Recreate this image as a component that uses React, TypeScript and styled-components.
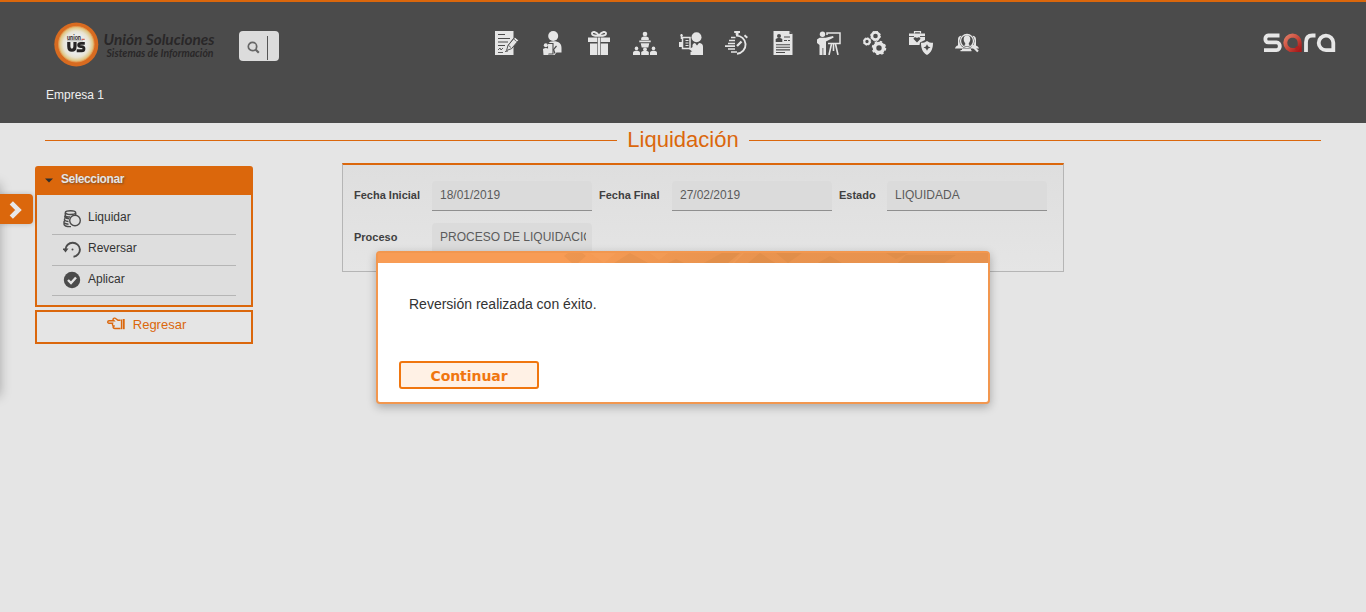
import React from 'react';
import styled, { createGlobalStyle } from 'styled-components';

const orange = '#db670c';
const ink = '#4b4b4b';
const light = '#e5e5e5';

const GlobalStyle = createGlobalStyle`
  * { box-sizing: border-box; }
  body {
    margin: 0;
    background: ${light};
    font-family: "Liberation Sans", Arial, sans-serif;
    font-size: 12px;
    color: #333;
    overflow: hidden;
  }
`;

const Page = styled.div`
  position: relative;
  min-height: 612px;
  overflow: hidden;
`;

const Header = styled.header`
  height: 123px;
  background: ${ink};
  border-top: 2px solid ${orange};
`;

const TopRow = styled.div`
  display: flex;
  height: 80px;
  padding: 19px 30px 0 52px;
`;

const SearchBox = styled.div`
  display: flex;
  align-items: center;
  width: 40px;
  height: 30px;
  margin: 10px 0 0 19px;
  padding: 0 11px 0 8px;
  background: #dcdcdc;
  border-radius: 4px;
  justify-content: space-between;
`;

const SearchIcon = styled.svg`
  display: block;
  width: 13px;
  height: 13px;
  margin-top: 3px;
`;

const SearchCaret = styled.span`
  width: 1px;
  height: 24px;
  margin-top: 3px;
  background: #555;
`;

const Nav = styled.nav`
  display: flex;
  gap: 22px;
  margin: 10px 0 0 216px;
`;

const NavIcon = styled.svg`
  display: block;
  width: 24px;
  height: 24px;
  color: ${light};
`;

const BrandSlot = styled.div`
  margin: 11px 0 0 auto;
`;

const Company = styled.div`
  padding: 6px 0 0 46px;
  line-height: 14px;
  color: #f0f0f0;
`;

const TitleRow = styled.div`
  display: flex;
  align-items: center;
  gap: 10px;
  height: 35px;
  padding: 0 45px;
`;

const Rule = styled.span`
  flex: 1;
  height: 1px;
  background: ${orange};
`;

const Title = styled.h1`
  margin: 0;
  padding-bottom: 2px;
  width: 112px;
  text-align: center;
  white-space: nowrap;
  font-size: 22px;
  line-height: 26px;
  font-weight: 400;
  color: ${orange};
`;

const Main = styled.main`
  display: flex;
  align-items: flex-start;
  padding: 5px 0 0 35px;
`;

const Sidebar = styled.aside`
  width: 218px;
  margin-top: 3px;
`;

const Menu = styled.section`
  height: 141px;
  border: 2px solid ${orange};
  border-radius: 3px 3px 0 0;
  background: #dedede;
`;

const MenuHeader = styled.div`
  display: flex;
  align-items: center;
  height: 27px;
  gap: 8px;
  padding: 0 8px 5px;
  background: ${orange};
  color: ${light};
  font-weight: 700;
  text-shadow: 1px 1px 2px rgba(60, 60, 60, 0.6);
`;

const MenuCaret = styled.svg`
  display: block;
  width: 8px;
  height: 5px;
  margin-top: 3px;
`;

const MenuLabel = styled.span`
  letter-spacing: -0.4px;
`;

const MenuList = styled.div`
  padding: 9px 15px 0;
`;

const MenuItem = styled.div`
  display: flex;
  align-items: center;
  gap: 7px;
  height: 31px;
  padding: 0 0 4px 11px;
  border-bottom: 1px solid #b5b5b5;
  &:last-child { height: 30px; }
`;

const ItemIcon = styled.svg`
  display: block;
  flex: none;
  width: 18px;
  height: 18px;
  margin-top: 3px;
  color: ${ink};
`;

const BackButton = styled.div`
  display: flex;
  justify-content: center;
  gap: 8px;
  height: 34px;
  margin-top: 3px;
  padding: 5px 0 0 5px;
  border: 2px solid ${orange};
  color: ${orange};
  font-size: 13px;
  line-height: 15px;
`;

const Panel = styled.section`
  display: grid;
  grid-template-columns: 78px 160px 80px 160px 55px 160px;
  grid-auto-rows: 30px;
  row-gap: 12px;
  width: 722px;
  height: 109px;
  margin-left: 89px;
  padding: 16px 0 0 11px;
  border: 1px solid #b5b5b5;
  border-top: 2px solid ${orange};
  background: linear-gradient(#dedede, #e5e5e5);
`;

const Label = styled.label<{ $inset?: number }>`
  padding-left: ${p => p.$inset ?? 0}px;
  font-size: 11px;
  line-height: 29px;
  font-weight: 700;
  color: #3f3f3f;
  white-space: nowrap;
`;

const Field = styled.div`
  padding: 0 6px 0 8px;
  border-bottom: 1px solid #8f8f8f;
  border-radius: 4px 4px 0 0;
  background: #dbdbdb;
  line-height: 28px;
  color: #5b5b5b;
`;

const FieldText = styled.span`
  display: block;
  overflow: hidden;
  white-space: nowrap;
`;

const DrawerShade = styled.div`
  position: absolute;
  left: -20px;
  top: 184px;
  width: 20px;
  height: 212px;
  box-shadow: 0 0 12px rgba(0, 0, 0, 0.28);
`;

const DrawerHandle = styled.button`
  position: absolute;
  left: 0;
  top: 194px;
  display: flex;
  align-items: center;
  width: 33px;
  height: 30px;
  padding: 2px 0 0 9px;
  border: 0;
  border-radius: 0 4px 4px 0;
  background: ${orange};
  box-shadow: 0 0 5px rgba(0, 0, 0, 0.2);
`;

const Dialog = styled.div`
  position: absolute;
  left: 376px;
  top: 251px;
  width: 614px;
  height: 153px;
  border: 2px solid #f2974f;
  border-radius: 4px;
  background: #fff;
  box-shadow: 0 3px 10px rgba(0, 0, 0, 0.28);
`;

const DialogBar = styled.svg`
  display: block;
  width: 610px;
  height: 10px;
`;

const Message = styled.p`
  margin: 33px 0 0 31px;
  font-size: 14px;
  line-height: 16px;
`;

const Continue = styled.button`
  display: block;
  width: 140px;
  height: 28px;
  margin: 49px 0 0 21px;
  padding: 1px 0 0;
  border: 2px solid #f0760f;
  border-radius: 3px;
  background: #fff1e5;
  color: #f0760f;
  font: 700 14px/22px "DejaVu Sans", Verdana, sans-serif;
  letter-spacing: -0.05px;
`;

const CompanyLogo = () => (
  <svg width="168" height="48" viewBox="0 0 168 48">
    <defs>
      <radialGradient id="disc">
        <stop offset="0.55" stopColor="#ebebe8" />
        <stop offset="0.74" stopColor="#e8e3d2" />
        <stop offset="0.9" stopColor="#e0cb92" />
        <stop offset="1" stopColor="#dfb062" />
      </radialGradient>
    </defs>
    <circle cx="24.3" cy="23.5" r="22" fill="#d86b20" />
    <circle cx="24.3" cy="23.2" r="17.8" fill="url(#disc)" stroke="#e69a55" strokeWidth="0.8" />
    <text x="15" y="18.5" fontFamily="Lato" fontWeight="900" fontSize="7.5" fill="#332d2d" textLength="14" lengthAdjust="spacingAndGlyphs">union</text>
    <path d="M29.5 18.3h3.200" stroke="#c34132" strokeWidth="1" />
    <path d="M15 19.8h16" stroke="#999" strokeWidth="0.7" />
    <path d="M16.8 21v4.200c0 5.400 6.200 5.400 6.200 0V21" fill="none" stroke="#272425" strokeWidth="3.200" />
    <path d="M32.800 22.400h-3.800c-3.100 0-3.100 3.200 0 3.200h.7c3 0 3 4.200 0 4.200h-5" fill="none" stroke="#272425" strokeWidth="2.900" />
    <g fill="#292728" fontFamily="Lato" fontWeight="700" fontStyle="italic">
      <text x="51.5" y="24.4" fontSize="14.500" textLength="111" lengthAdjust="spacingAndGlyphs">Unión Soluciones</text>
      <text x="54.5" y="36" fontSize="10.500" textLength="107" lengthAdjust="spacingAndGlyphs">Sistemas de Información</text>
    </g>
  </svg>
);

const SaraLogo = () => (
  <svg width="73" height="22" viewBox="0 0 73 22">
    <defs>
      <linearGradient id="drop" x1="0" y1="0" x2="1" y2="1">
        <stop offset="0" stopColor="#e07a63" />
        <stop offset="0.5" stopColor="#cb4b3c" />
        <stop offset="1" stopColor="#a81b1b" />
      </linearGradient>
    </defs>
    <g fill="none" stroke="#e6e6e6" strokeWidth="3.8">
      <path d="M16.5 3.5H5.2C1.4 3.5 1.4 10.4 5.2 10.4h8.3c4.4 0 4.4 7.7 0 7.7H1" />
      <path d="M43 20v-9.7c0-4.5 2.5-6.8 6.3-6.8h3.2" />
      <path d="M70.3 20v-9.300A7.3 7.200 0 1 0 63 18.1h7.3" />
    </g>
    <path d="M29.6 3.5a7.3 7.3 0 1 0 0 14.6h7.1v-7.3a7.200 7.200 0 0 0-7.1-7.3Z" fill="none" stroke="url(#drop)" strokeWidth="4" />
    <path d="M32.500 18v-3.200l3.500-1V18Z" fill="#b2211f" />
  </svg>
);

const navIcons: React.ReactNode[] = [
  <>
    <path d="M0 0h18.500v7l-5.500 7-1 5 5-1.500 1.500-2V24H0Z" fill="currentColor" />
    <path d="M3 3.500h7M3 7.500h12M3 11h10M3 14.500h7" stroke={ink} strokeWidth="1.2" />
    <path d="m3 19 2-2 1 2 2-2M3 21.500h5m2-1 3-.5" stroke={ink} fill="none" strokeWidth="0.9" />
    <path d="m11.500 19.500 1.500-5 7-8.300 3.700 3-7.200 8.500Z" fill="currentColor" stroke={ink} strokeWidth="0.9" />
    <path d="m18.700 8 3 2.600m-8.400 3.600 2.800 2.400" stroke={ink} strokeWidth="0.8" />
  </>,
  <>
    <circle cx="12.2" cy="5" r="5" fill="currentColor" />
    <path d="M7 13c1-2 3-2.700 5.500-2.700 5.500 0 8 2.500 8 6.500v4.700h-5L13.500 24H6Z" fill="currentColor" />
    <path d="M6.500 12.500h5.500v10.500H6.500Z" fill="currentColor" stroke={ink} strokeWidth="1.100" />
    <circle cx="4.800" cy="14.300" r="2" fill="currentColor" />
    <path d="M2 18c2-1.500 4-1.500 5.500 0l1 2-1.500 4H2.500Z" fill="currentColor" />
    <path d="m15.500 15-3 3.500 1.500 4" stroke={ink} fill="none" strokeWidth="1.200" />
  </>,
  <>
    <path d="M1 6.500h9.200V11H1ZM13.800 6.500H23V11h-9.200ZM3 12.500h7.200V24H3ZM13.800 12.500H21V24h-7.200ZM10.800 6.500h2.400V24h-2.400Z" fill="currentColor" />
    <path d="M12 4.500C9 .2 5 .2 5 2.500S9 5 12 4.500C15 .2 19 .2 19 2.500S15 5 12 4.500Z" fill="none" stroke="currentColor" strokeWidth="1.900" />
  </>,
  <g fill="currentColor">
    <circle cx="12" cy="3" r="2.300" />
    <path d="M8.200 9V7.500c0-2.600 7.600-2.600 7.600 0V9Z" />
    <path d="M6.300 9.500h11.400v1.800H6.300ZM7.700 12.200h8.600l-1 4.300H8.700Z" />
    <circle cx="3.500" cy="17.400" r="1.800" />
    <path d="M0 24v-2.500c0-2.200 7-2.200 7 0V24Z" />
    <circle cx="12" cy="18.300" r="1.900" />
    <path d="M8.200 24v-2.500c0-2.200 7.600-2.200 7.600 0V24Z" />
    <circle cx="20.500" cy="17.400" r="1.800" />
    <path d="M17 24v-2.500c0-2.200 7-2.200 7 0V24Z" />
  </g>,
  <>
    <circle cx="17.500" cy="6.300" r="5" fill="currentColor" />
    <path d="M11.500 24v-3l2-1v-6c.5-1.300 1.500-2 2.500-2l2 2.500 2-2.500c2.500 0 4 1.300 4 3.700V24Z" fill="currentColor" />
    <path d="M3.500 6.500h7.500v11H3.500Z" fill={ink} stroke="currentColor" strokeWidth="1.5" />
    <path d="M6.500 9.500h3M6.500 12h3M6.500 14.500h3" stroke="currentColor" />
    <path d="M0 11h4v5H0ZM10 18l4-2v5Z" fill="currentColor" />
    <path d="M2.500 3v5M1.300 4.500h2.500" stroke="currentColor" strokeWidth="1.5" />
  </>,
  <>
    <path d="M11 4.600A9 9 0 1 1 12 22.700" fill="none" stroke="currentColor" strokeWidth="1.900" />
    <path d="M9.200 0H15v2H9.200ZM10.700 2h2.800v2h-2.800Z" fill="currentColor" />
    <path d="m19.500 4.200 2.800 2.500" stroke="currentColor" strokeWidth="2" />
    <path d="m12 15 4.500-4.500" stroke="currentColor" strokeWidth="2.300" />
    <path d="M6 6.500h4.500M4 9.500h6M3 12.500h7M0 15.200h10M3 18h7M6 21h6" stroke="currentColor" strokeWidth="1.700" />
  </>,
  <>
    <path d="M2.500 0h16l3 3v21h-19Z" fill="currentColor" />
    <path d="m18.500 0 3 3h-3Z" fill={ink} />
    <circle cx="8" cy="5" r="2" fill={ink} />
    <path d="M4.700 11V8.500c0-2 6.600-2 6.600 0V11Z" fill={ink} />
    <path d="M13 6h6M13 9.500h3M17 9.500h2M5 13.700h14M5 16.300h14M5 18.900h14M5 21.500h9" stroke={ink} strokeWidth="1.1" />
  </>,
  <>
    <circle cx="5.500" cy="3.200" r="2.700" fill="currentColor" />
    <path d="M2.500 6.700h6.200L16 5l.7 1.500L9 10.500V24H6.300v-7h-.8v7H2.500V14L0 12V8.500Z" fill="currentColor" />
    <path d="M10 4V2h13v10.500H11" fill="none" stroke="currentColor" strokeWidth="1.5" />
    <path d="m14.500 13-2.500 11M18.500 13l2.500 11M16.500 13v7" stroke="currentColor" strokeWidth="1.600" />
  </>,
  <g fill="none" stroke="currentColor">
    <circle cx="12.500" cy="5" r="3.600" strokeWidth="2.600" />
    <circle cx="12.500" cy="5" r="4.900" strokeWidth="1" strokeDasharray="1.900 1.950" />
    <circle cx="4" cy="10.500" r="2.700" strokeWidth="2.100" />
    <circle cx="4" cy="10.500" r="3.700" strokeWidth="1" strokeDasharray="1.400 1.500" />
    <circle cx="16" cy="17" r="4.500" strokeWidth="3.600" />
    <circle cx="16" cy="17" r="6.500" strokeWidth="1.500" strokeDasharray="2.550 2.550" />
  </g>,
  <>
    <path d="M5.500 2.500V.7h6v1.800" fill="none" stroke="currentColor" strokeWidth="1.200" />
    <path d="M0 2.500h16v6.500l-5 2.500-.5 2.500H0Z" fill="currentColor" />
    <path d="M0 5.500h5m6 0h5" stroke={ink} strokeWidth="0.9" />
    <path d="M8 11.500 4.800 8.200c-1-2 2-2.800 3.200-1.200 1.200-1.600 4.200-.8 3.200 1.200Z" fill={ink} />
    <path d="M18 10c1.700 1.300 3.500 1.800 6 1.800 0 5.500-1.500 9.700-6 12.200-4.500-2.500-6-6.700-6-12.200 2.500 0 4.300-.5 6-1.800Z" fill="currentColor" />
    <path d="m18 13.300 1.200 2.300 2.300.9-2.300 1L18 19.800l-1.200-2.300-2.300-1 2.300-.9Z" fill={ink} />
  </>,
  <>
    <path d="M3 17V8.500c0-4.300 5-5 5.500-1.500v9M21 17V8.500c0-4.300-5-5-5.500-1.500v9" fill="currentColor" />
    <path d="M0 17.500c1-3.500 4-3.500 7-3.500h10c3 0 6 .5 7 3.500Z" fill="currentColor" />
    <circle cx="12" cy="10" r="7.600" fill={ink} />
    <circle cx="12" cy="10" r="6.500" fill="none" stroke="currentColor" strokeWidth="1.300" />
    <path d="M8.700 8c0-5 6.600-5 6.600 0 0 2-.8 3.500-1.500 4v1.500l1.200.8c-1.500 1.200-4.500 1.200-6 0l1.200-.8V12c-.7-.5-1.500-2-1.500-4Z" fill="currentColor" />
    <path d="M5.500 19.700h11M7 18.300h9" stroke="currentColor" strokeWidth="1.300" />
    <path d="m17 14.500 6 6" stroke="currentColor" strokeWidth="2.200" />
  </>,
];

const CoinsIcon = () => (
  <ItemIcon viewBox="0 0 18 18" fill="none" stroke="currentColor" strokeWidth="1.4">
    <ellipse cx="7.500" cy="2.600" rx="5.200" ry="1.900" />
    <path d="M2.300 3v2.200c0 1 2 1.800 4.700 1.800M12.700 3v2.300M2.300 5.500c-1.300 1.600 0 3 3.700 3.200M2 8.500c-1.300 1.600 0 2.800 3.500 3M1.500 11c-1.500 1.700 0 3 4 3.200M1 13.500c-.5 2.300 2.500 3.300 7 3.100" />
    <circle cx="12" cy="10.500" r="5.300" />
  </ItemIcon>
);

const ReverseIcon = () => (
  <ItemIcon viewBox="0 0 18 18" fill="none" stroke="currentColor" strokeWidth="1.900">
    <path d="M2.500 8.500A7.200 7 0 1 1 10.500 15.700" />
    <path d="M-.5 7.500h6L2.500 11.400Z" fill="currentColor" stroke="none" />
    <circle cx="9.500" cy="8.500" r="1" fill="currentColor" stroke="none" />
  </ItemIcon>
);

const ApplyIcon = () => (
  <ItemIcon viewBox="0 0 18 18">
    <circle cx="9" cy="9" r="8.200" fill="currentColor" />
    <path d="m5 9 3 3 5-5.500" fill="none" stroke="#e5e5e5" strokeWidth="2.400" />
  </ItemIcon>
);

const HandIcon = () => (
  <svg width="18" height="13" viewBox="0 0 18 13" fill="none" stroke="currentColor" strokeWidth="1.400">
    <path d="M13.500 11.500H8C6.500 11.500 5.700 10.300 6.200 9 5.300 8.300 5.300 7.300 5.600 6.300H2C.3 6.300.3 3.700 2 3.700h5L6 2.700C6 1 8 .7 9 1.700l2 1.600h2.500M6.200 9h1.600" />
    <path d="M14.500 2.500v9.700" strokeWidth="1.300" />
    <path d="M16.700 2v10.200" strokeWidth="2" />
  </svg>
);

export default function App() {
  return (
    <Page>
      <GlobalStyle />
      <Header>
        <TopRow>
          <CompanyLogo />
          <SearchBox>
            <SearchIcon viewBox="0 0 13 13" fill="none" stroke="#666">
              <circle cx="5.500" cy="5.500" r="4.200" strokeWidth="1.700" />
              <path d="m8.500 8.500 3.300 3.300" strokeWidth="2.200" />
            </SearchIcon>
            <SearchCaret />
          </SearchBox>
          <Nav>
            {navIcons.map((icon, i) => (
              <NavIcon key={i} viewBox="0 0 24 24">{icon}</NavIcon>
            ))}
          </Nav>
          <BrandSlot><SaraLogo /></BrandSlot>
        </TopRow>
        <Company>Empresa 1</Company>
      </Header>
      <TitleRow>
        <Rule />
        <Title>Liquidación</Title>
        <Rule />
      </TitleRow>
      <Main>
        <Sidebar>
          <Menu>
            <MenuHeader>
              <MenuCaret viewBox="0 0 8 5"><path d="M0 .5h8l-4 4Z" fill="#2e2e2e" /></MenuCaret>
              <MenuLabel>Seleccionar</MenuLabel>
            </MenuHeader>
            <MenuList>
              <MenuItem><CoinsIcon />Liquidar</MenuItem>
              <MenuItem><ReverseIcon />Reversar</MenuItem>
              <MenuItem><ApplyIcon />Aplicar</MenuItem>
            </MenuList>
          </Menu>
          <BackButton><HandIcon />Regresar</BackButton>
        </Sidebar>
        <Panel>
          <Label>Fecha Inicial</Label>
          <Field><FieldText>18/01/2019</FieldText></Field>
          <Label $inset={7}>Fecha Final</Label>
          <Field><FieldText>27/02/2019</FieldText></Field>
          <Label $inset={7}>Estado</Label>
          <Field><FieldText>LIQUIDADA</FieldText></Field>
          <Label>Proceso</Label>
          <Field><FieldText>PROCESO DE LIQUIDACIÓN</FieldText></Field>
        </Panel>
      </Main>
      <DrawerShade />
      <DrawerHandle>
        <svg width="14" height="18" viewBox="0 0 14 18"><path d="m2.300 1.800 7.200 7.200-7.200 7.200" fill="none" stroke="#e8e8e8" strokeWidth="4.600" /></svg>
      </DrawerHandle>
      <Dialog>
        <DialogBar viewBox="0 0 610 10">
          <defs>
            <linearGradient id="bar">
              <stop offset="0.3" stopColor="#f89c55" />
              <stop offset="0.55" stopColor="#ea944f" />
              <stop offset="1" stopColor="#e7924e" />
            </linearGradient>
          </defs>
          <path d="M0 0h610v10H0Z" fill="url(#bar)" />
          <g fill="#b06f35" fillOpacity="0.14">
            <path d="m186 3 4-3h14l4 3-8 7h-6ZM236 10l16-10 18 10ZM246 10l7-7 9 7ZM290 10l8-4 8 4ZM326 10l18-10h20l-10 10ZM370 10l12-10 15 10ZM398 0l12 10 14-10ZM440 10l12-7 12 7ZM508 0h22l-12 6ZM520 10l8-8h50l-12 8Z" />
          </g>
          <g fill="#f9a45f" fillOpacity="0.35">
            <path d="M212 0h26l-12 10ZM350 10l12-10 4 0-10 10ZM272 0h18l-9 7Z" />
          </g>
        </DialogBar>
        <Message>Reversión realizada con éxito.</Message>
        <Continue>Continuar</Continue>
      </Dialog>
    </Page>
  );
}
